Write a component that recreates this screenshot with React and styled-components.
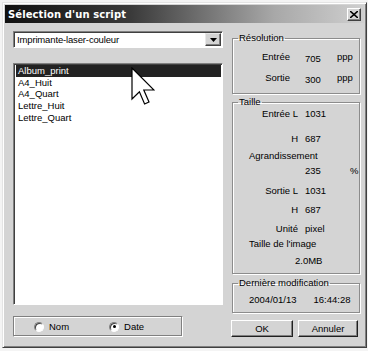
import React from 'react'
import styled, { createGlobalStyle } from 'styled-components'

const GlobalStyle = createGlobalStyle`
  html, body {
    margin: 0;
    padding: 0;
    background: #f4f4f4;
  }
  body {
    font-family: "Liberation Sans", Arial, sans-serif;
    font-size: 9.5px;
    color: #000;
  }
`

const scripts = ['Album_print', 'A4_Huit', 'A4_Quart', 'Lettre_Huit', 'Lettre_Quart']

export default function App() {
  return (
    <>
      <GlobalStyle />
      <Window>
        <TitleBar>
          <Title>Sélection d'un script</Title>
          <CloseButton>
            <svg width="8" height="7" viewBox="0 0 8 7">
              <path d="M0 0 L8 7 M8 0 L0 7" stroke="#000" strokeWidth="1.6" />
            </svg>
          </CloseButton>
        </TitleBar>

        <Body>
          <LeftColumn>
            <Select>
              <SelectText>Imprimante-laser-couleur</SelectText>
              <SelectArrow>
                <svg width="7" height="4" viewBox="0 0 7 4">
                  <path d="M0 0 H7 L3.5 4 Z" fill="#000" />
                </svg>
              </SelectArrow>
            </Select>

            <ListBox>
              {scripts.map((s, i) => (
                <ListItem key={s} $selected={i === 0}>{s}</ListItem>
              ))}
              <Cursor width="24" height="40" viewBox="0 0 12 20">
                <path
                  d="M0.5 0.5 L0.5 16 L4.2 12.4 L6.8 18.5 L9 17.5 L6.4 11.5 L11.5 11.5 Z"
                  fill="#fff"
                  stroke="#000"
                  strokeWidth="0.6"
                />
              </Cursor>
            </ListBox>

            <RadioGroup>
              <RadioLabel>
                <Radio />
                Nom
              </RadioLabel>
              <RadioLabel>
                <Radio $checked />
                Date
              </RadioLabel>
            </RadioGroup>
          </LeftColumn>

          <RightColumn>
            <Group $height={61}>
              <Legend>Résolution</Legend>
              <ResGrid $top={8}>
                <Label>Entrée</Label><ResValue>705</ResValue><Unit>ppp</Unit>
              </ResGrid>
              <ResGrid $top={8}>
                <Label>Sortie</Label><ResValue>300</ResValue><Unit>ppp</Unit>
              </ResGrid>
            </Group>

            <Group $height={177} $top={3}>
              <Legend>Taille</Legend>
              <SizeRow $top={1}><Label>Entrée L</Label><Value>1031</Value></SizeRow>
              <SizeRow $top={14}><Label>H</Label><Value>687</Value></SizeRow>
              <WideLabel $top={6}>Agrandissement</WideLabel>
              <SizeRow $top={4}><Label /><Value>235</Value><Unit>%</Unit></SizeRow>
              <SizeRow $top={9}><Label>Sortie L</Label><Value>1031</Value></SizeRow>
              <SizeRow $top={8}><Label>H</Label><Value>687</Value></SizeRow>
              <SizeRow $top={8}><Label>Unité</Label><Value>pixel</Value></SizeRow>
              <WideLabel $top={4}>Taille de l'image</WideLabel>
              <WideLabel $top={6} $indent={62}>2.0MB</WideLabel>
            </Group>

            <Group $height={35} $top={4}>
              <Legend>Dernière modification</Legend>
              <DateRow>
                <span>2004/01/13</span>
                <span>16:44:28</span>
              </DateRow>
            </Group>

            <ButtonRow>
              <Button $default>OK</Button>
              <Button>Annuler</Button>
            </ButtonRow>
          </RightColumn>
        </Body>
      </Window>
    </>
  )
}

const Window = styled.div`
  box-sizing: border-box;
  width: 365px;
  height: 346px;
  margin: 2px 0 0 2px;
  background: #d4d4d4;
  border: 1px solid;
  border-color: #e4e4e4 #404040 #404040 #e4e4e4;
  box-shadow: inset 1px 1px 0 #ffffff, inset -1px -1px 0 #808080;
  padding: 2px;
  display: flex;
  flex-direction: column;
`

const TitleBar = styled.div`
  height: 18px;
  display: flex;
  align-items: center;
  justify-content: space-between;
  padding: 0 3px 0 3px;
  background: linear-gradient(to right, #111111 0%, #3a3a3a 35%, #a8a8a8 75%, #cfcfcf 100%);
`

const Title = styled.span`
  color: #fff;
  font-family: "DejaVu Sans", "Liberation Sans", sans-serif;
  font-weight: bold;
  font-size: 10px;
  letter-spacing: 0.1px;
`

const CloseButton = styled.div`
  box-sizing: border-box;
  width: 14px;
  height: 13px;
  background: #d4d4d4;
  border: 1px solid;
  border-color: #ffffff #404040 #404040 #ffffff;
  box-shadow: inset -1px -1px 0 #808080;
  display: flex;
  align-items: center;
  justify-content: center;
`

const Body = styled.div`
  flex: 1;
  display: flex;
  padding: 8px 0 0 8px;
  gap: 9px;
`

const LeftColumn = styled.div`
  width: 210px;
  display: flex;
  flex-direction: column;
`

const Select = styled.div`
  box-sizing: border-box;
  height: 17px;
  display: flex;
  align-items: center;
  background: #fff;
  border: 1px solid;
  border-color: #808080 #ffffff #ffffff #808080;
  box-shadow: inset 1px 1px 0 #404040;
  padding: 1px 1px 1px 3px;
`

const SelectText = styled.span`
  flex: 1;
  letter-spacing: -0.15px;
`

const SelectArrow = styled.div`
  box-sizing: border-box;
  width: 16px;
  height: 13px;
  background: #d4d4d4;
  border: 1px solid;
  border-color: #e8e8e8 #404040 #404040 #e8e8e8;
  box-shadow: inset -1px -1px 0 #808080;
  display: flex;
  align-items: center;
  justify-content: center;
`

const ListBox = styled.div`
  position: relative;
  box-sizing: border-box;
  height: 242px;
  margin-top: 15px;
  background: #fff;
  border: 1px solid;
  border-color: #808080 #ffffff #ffffff #808080;
  box-shadow: inset 1px 1px 0 #404040;
  padding: 1px 1px 0 2px;
  display: flex;
  flex-direction: column;
`

const ListItem = styled.div`
  height: 11.7px;
  line-height: 11.7px;
  padding-left: 2px;
  color: ${p => (p.$selected ? '#ffffff' : '#000000')};
  background: ${p => (p.$selected ? '#222222' : 'transparent')};
`

const Cursor = styled.svg`
  position: absolute;
  left: 117px;
  top: 3px;
`

const RadioGroup = styled.div`
  box-sizing: border-box;
  width: 170px;
  height: 21px;
  margin-top: 11px;
  border: 1px solid;
  border-color: #808080 #ffffff #ffffff #808080;
  box-shadow: inset -1px -1px 0 #808080, inset 1px 1px 0 #ffffff;
  display: flex;
  align-items: center;
  padding-left: 20px;
  gap: 40px;
`

const RadioLabel = styled.label`
  display: flex;
  align-items: center;
  gap: 5px;
`

const Radio = styled.span`
  box-sizing: border-box;
  width: 10px;
  height: 10px;
  border-radius: 50%;
  background: #fff;
  border: 1px solid;
  border-color: #808080 #ffffff #ffffff #808080;
  box-shadow: inset 1px 1px 0 #404040;
  position: relative;
  &::after {
    content: '';
    display: ${p => (p.$checked ? 'block' : 'none')};
    position: absolute;
    left: 2.5px;
    top: 2.5px;
    width: 3px;
    height: 3px;
    border-radius: 50%;
    background: #000;
  }
`

const RightColumn = styled.div`
  width: 128px;
  display: flex;
  flex-direction: column;
  padding-top: 2px;
`

const Group = styled.fieldset`
  box-sizing: border-box;
  height: ${p => p.$height}px;
  margin: ${p => p.$top || 0}px 0 0 0;
  padding: 0;
  border: 1px solid #8c8c8c;
  box-shadow: 1px 1px 0 #ffffff, inset 1px 1px 0 #ffffff;
  display: flex;
  flex-direction: column;
  min-width: 0;
`

const Legend = styled.legend`
  padding: 0 1px 0 1px;
  margin-left: 5px;
  line-height: 10px;
`

const ResGrid = styled.div`
  display: grid;
  grid-template-columns: 57px 47px auto;
  margin-top: ${p => p.$top}px;
  line-height: 11px;
`

const Label = styled.span`
  text-align: right;
  white-space: nowrap;
`

const ResValue = styled.span`
  padding: 2px 0 0 15px;
`

const Value = styled.span`
  white-space: nowrap;
`

const Unit = styled.span`
  white-space: nowrap;
`

const SizeRow = styled.div`
  display: grid;
  grid-template-columns: 65px 38px auto;
  column-gap: 7px;
  margin-top: ${p => p.$top}px;
  line-height: 11px;
`

const WideLabel = styled.div`
  padding-left: ${p => p.$indent || 16}px;
  margin-top: ${p => p.$top}px;
  line-height: 11px;
`

const DateRow = styled.div`
  display: flex;
  gap: 17px;
  padding: 6px 0 0 16px;
  line-height: 11px;
`

const ButtonRow = styled.div`
  display: flex;
  gap: 5px;
  margin-top: 7px;
  margin-left: -1px;
`

const Button = styled.div`
  box-sizing: border-box;
  width: ${p => (p.$default ? 62 : 60)}px;
  height: 17px;
  display: flex;
  align-items: center;
  justify-content: center;
  background: #d4d4d4;
  border: 1px solid;
  border-color: #ffffff #202020 #202020 #ffffff;
  box-shadow: inset -1px -1px 0 #808080;
`
